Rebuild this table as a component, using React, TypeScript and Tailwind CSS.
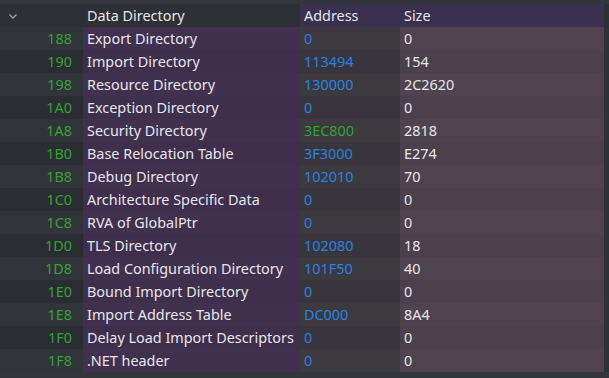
import React from 'react';

type Row = { off: string; name: string; addr: string; size: string; green?: boolean };

const rows: Row[] = [
  { off: '188', name: 'Export Directory', addr: '0', size: '0' },
  { off: '190', name: 'Import Directory', addr: '113494', size: '154' },
  { off: '198', name: 'Resource Directory', addr: '130000', size: '2C2620' },
  { off: '1A0', name: 'Exception Directory', addr: '0', size: '0' },
  { off: '1A8', name: 'Security Directory', addr: '3EC800', size: '2818', green: true },
  { off: '1B0', name: 'Base Relocation Table', addr: '3F3000', size: 'E274' },
  { off: '1B8', name: 'Debug Directory', addr: '102010', size: '70' },
  { off: '1C0', name: 'Architecture Specific Data', addr: '0', size: '0' },
  { off: '1C8', name: 'RVA of GlobalPtr', addr: '0', size: '0' },
  { off: '1D0', name: 'TLS Directory', addr: '102080', size: '18' },
  { off: '1D8', name: 'Load Configuration Directory', addr: '101F50', size: '40' },
  { off: '1E0', name: 'Bound Import Directory', addr: '0', size: '0' },
  { off: '1E8', name: 'Import Address Table', addr: 'DC000', size: '8A4' },
  { off: '1F0', name: 'Delay Load Import Descriptors', addr: '0', size: '0' },
  { off: '1F8', name: '.NET header', addr: '0', size: '0' },
];

export default function App() {
  return (
    <div
      className="w-[609px] h-[378px] bg-[#33373c] pt-[4px] overflow-hidden text-[14.4px] text-[#e6e6ea]"
      style={{ fontFamily: '"Noto Sans", "Open Sans", sans-serif' }}
    >
      {/* header */}
      <div className="flex h-[23px] leading-[24px]">
        <div className="w-[83px] bg-[#2d3035] flex items-center pl-[7px]">
          <svg width="12" height="12" viewBox="0 0 12 12" fill="none">
            <path d="M2.5 4.5 L6 8 L9.5 4.5" stroke="#9aa0a6" strokeWidth="1.4" />
          </svg>
        </div>
        <div className="w-[217px] bg-[#2d3035] pl-[4px]">Data Directory</div>
        <div className="w-[100px] bg-[#3a3150] pl-[4px]">Address</div>
        <div className="w-[204px] bg-[#3a3150] pl-[4px]">Size</div>
        <div className="flex-1 bg-[#2d3035]" />
      </div>

      {/* rows */}
      {rows.map((r, i) => (
        <div key={r.off} className="flex h-[23px] leading-[24px]">
          <div
            className={
              'w-[83px] text-right pr-[11px] text-[#35a035] ' +
              (i % 2 === 0 ? 'bg-[#31353a]' : 'bg-[#2a2d31]')
            }
          >
            {r.off}
          </div>
          <div
            className={
              'w-[217px] pl-[4px] whitespace-nowrap overflow-hidden ' +
              (i % 2 === 0 ? 'bg-[#42304f]' : 'bg-[#3f2e4c]')
            }
          >
            {r.name}
          </div>
          <div
            className={
              'w-[100px] pl-[4px] ' +
              (r.green ? 'text-[#35a035] ' : 'text-[#2b80e0] ') +
              (i % 2 === 0 ? 'bg-[#3c393f]' : 'bg-[#38363c]')
            }
          >
            {r.addr}
          </div>
          <div
            className={
              'w-[204px] pl-[4px] ' + (i % 2 === 0 ? 'bg-[#50434f]' : 'bg-[#4c404c]')
            }
          >
            {r.size}
          </div>
          <div className="flex-1 bg-[#2d3035]" />
        </div>
      ))}
    </div>
  );
}
